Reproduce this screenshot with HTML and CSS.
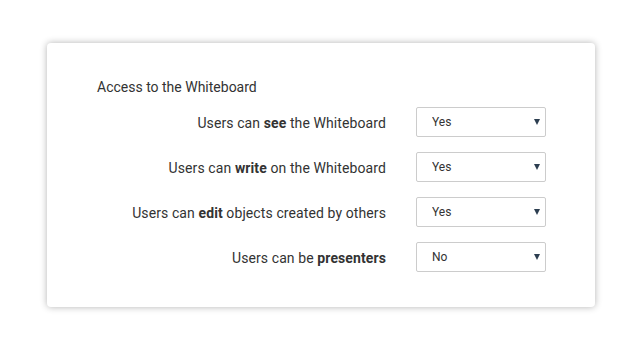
FILE: index.html
```html
<!DOCTYPE html>
<html lang="en">
<head>
    <meta charset="UTF-8">
    <meta name="viewport" content="width=device-width, initial-scale=1.0">
    <title>Whiteboard Access</title>
    <link rel="stylesheet" href="styles.css">
</head>
<body>
    <div class="card">
        <h2>Access to the Whiteboard</h2>
        <div class="settings">
            <div class="row">
                <label for="see">Users can <b>see</b> the Whiteboard</label>
                <div class="select-wrap">
                    <select id="see">
                        <option selected>Yes</option>
                        <option>No</option>
                    </select>
                    <span class="arrow"></span>
                </div>
            </div>
            <div class="row">
                <label for="write">Users can <b>write</b> on the Whiteboard</label>
                <div class="select-wrap">
                    <select id="write">
                        <option selected>Yes</option>
                        <option>No</option>
                    </select>
                    <span class="arrow"></span>
                </div>
            </div>
            <div class="row">
                <label for="edit">Users can <b>edit</b> objects created by others</label>
                <div class="select-wrap">
                    <select id="edit">
                        <option selected>Yes</option>
                        <option>No</option>
                    </select>
                    <span class="arrow"></span>
                </div>
            </div>
            <div class="row">
                <label for="present">Users can be <b>presenters</b></label>
                <div class="select-wrap">
                    <select id="present">
                        <option>Yes</option>
                        <option selected>No</option>
                    </select>
                    <span class="arrow"></span>
                </div>
            </div>
        </div>
    </div>
</body>
</html>
```

FILE: styles.css
```css
body {
    font-family: Roboto, "Liberation Sans", sans-serif;
    margin: 0;
    background-color: #fff;
    color: #333;
    padding: 43px 46px 44px 47px;
}
.card {
    background-color: #fff;
    border-radius: 4px;
    box-shadow: 0 0 7px rgba(0, 0, 0, 0.3);
    padding: 36px 49px 35px 50px;
    width: 449px;
}
.card h2 {
    font-size: 14px;
    font-weight: normal;
    line-height: 17px;
    margin: 0 0 11px;
}
.settings {
    display: flex;
    flex-direction: column;
    gap: 15px;
}
.row {
    display: flex;
    align-items: center;
    gap: 30px;
}
.row label {
    width: 289px;
    text-align: right;
    font-size: 14px;
    letter-spacing: 0.1px;
    padding-top: 2px;
}
.row label b {
    font-weight: bold;
}
.select-wrap {
    position: relative;
    width: 130px;
    height: 30px;
}
.select-wrap select {
    appearance: none;
    -webkit-appearance: none;
    width: 100%;
    height: 100%;
    border: 1px solid #ccc;
    border-radius: 2px;
    background-color: #fff;
    padding: 0 0 0 15px;
    font-family: Roboto, "Liberation Sans", sans-serif;
    font-size: 12px;
    color: #333;
}
.arrow {
    position: absolute;
    right: 6px;
    top: 12px;
    width: 0;
    height: 0;
    border-left: 3px solid transparent;
    border-right: 3px solid transparent;
    border-top: 6px solid #2c3e50;
    pointer-events: none;
}
```
